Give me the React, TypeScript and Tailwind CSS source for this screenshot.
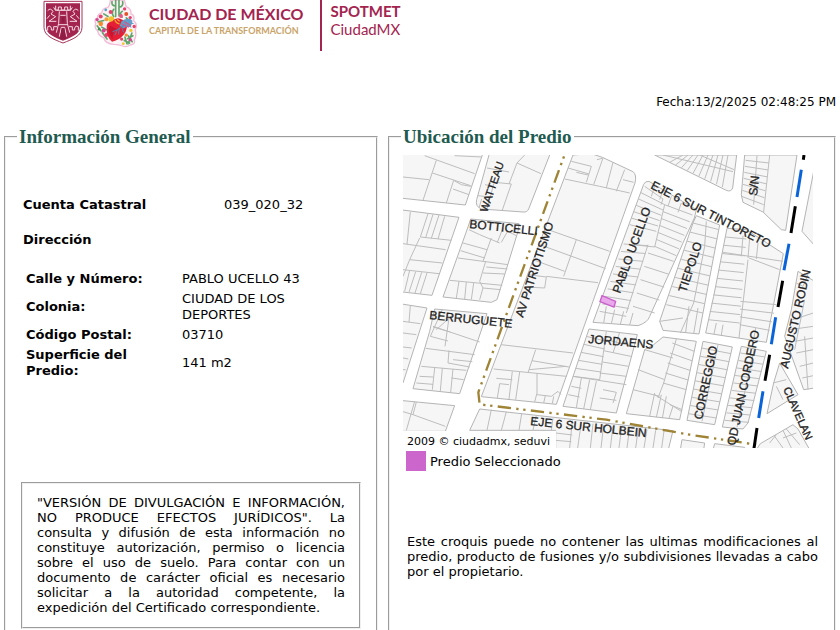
import type { ReactNode } from "react";

type Rung = [number, number, number, number, number, number, number, number, number];

// evenly spaced lot lines between the edges a-b and c-d
function rungs([ax, ay, bx, by, cx, cy, dx, dy, n]: Rung) {
  let d = "";
  for (let i = 0; i <= n; i++) {
    const t = i / n;
    d += `M${ax + (bx - ax) * t} ${ay + (by - ay) * t}L${cx + (dx - cx) * t} ${cy + (dy - cy) * t}`;
  }
  return d;
}

const blocks = [
  "M0 0L253 0L248 16L197 166L0 145Z",
  "M273 0L456 0L450 16L387 178Q382 189 370 187L245 178Q226 170 231 150L268 16Z",
  "M0 180L178 203L97 437L0 426Z",
  "M213 208L358 222L356 242L292 450L275 458L130 442L205 232Z",
  "M0 462L82 475L10 700L0 700Z",
  "M105 478L262 492L180 732L40 717L90 545Z",
  "M0 752L165 768L137 845L0 845Z",
  "M240 778L820 843L806 900L468 900L468 842L210 842Z",
  "M520 16L575 12L608 23L700 66Q712 75 706 100L470 764L245 741L304 585Z",
  "M748 95L890 180L884 205L750 500Q745 518 715 528L580 518L732 104Q736 94 748 95Z",
  "M568 538L713 555L650 790L490 770Z",
  "M890 198L960 226L898 553L790 542L780 515L802 450L880 220Z",
  "M790 562L890 575L840 810L680 792L735 600L762 585Z",
  "M982 236L1040 240L1151 312L1100 578L918 550L942 440Z",
  "M910 575L998 592L945 825L862 812Z",
  "M1025 590L1100 605L1045 820L1030 838L968 832Z",
  "M765 16L1011 16L999 115Q994 128 980 122Z",
  "M1035 16L1192 16L1158 242L1145 240L1090 187L1030 158L1025 135Z",
  "M1245 50L1207 245L1245 288Z",
  "M1195 365L1245 395L1245 715L1212 720L1155 560L1175 480Z",
  "M1140 640L1195 735L1102 792L1122 700Z",
  "M1082 882L1180 825L1195 838L1230 900L1070 900Z",
  "M847 870L915 880L912 900L842 900Z",
  "M945 882L1035 893L1035 900L940 900Z",
];

const lots = [
  // west of Watteau
  "M10 82L88 90M70 152L110 32M75 18L225 72M98 70L213 108M165 18L246 22M162 92L140 160M162 92L185 105L213 110M160 118L208 135",
  "M375 16L352 40L424 72M352 40L328 103M285 98L335 103L308 181M262 55L328 67M235 138L270 142M283 100L262 178M256 105L283 110M246 148L238 175",
  "M32 187L22 284M10 282L138 300M85 192L62 262L155 272M100 194L78 264M118 196L95 266M135 200L115 268M60 265L30 330L10 380M30 330L128 340M10 360L118 372M30 362L15 425M48 366L28 428M66 368L46 430M82 370L62 432",
  // Botticelli to Berruguete
  "M208 240L240 255L300 280M308 240L293 278M325 243L305 278M190 280L262 300M183 303L255 325M175 325L325 345M275 265L250 335M258 335L240 395L250 415L240 450M260 352L323 358M250 370L315 373M150 392L308 407M178 395L170 445M200 397L195 448M222 400L215 450M250 415L303 420M320 243L350 258",
  "M10 515L62 522M32 468L28 518M10 550L50 555M10 592L36 595M10 625L26 628M10 660L18 660",
  "M128 480L92 560L145 574M100 532L152 547M110 540L160 495M148 505L136 590M100 530L240 577M78 596L225 615M148 602L145 640L210 652M160 630L218 636M65 650L200 662M105 655L98 720M128 655L122 724M160 658L153 728M60 680L100 682M50 700L100 704M155 685L192 690",
  "M45 755L20 842M50 757L40 795L137 830M40 795L10 786",
  "M275 780L262 842M320 786L305 842M366 792L358 842M410 797L400 842M460 806L455 842M468 850L518 856M468 872L515 876M518 812L510 895M545 818L534 895M580 822L572 895M612 826L604 895M640 830L632 895M666 832L658 895M690 833L682 895M716 836L708 895M742 840L733 895M768 842L760 895M793 844L786 895",
  // big block east of Patriotismo
  "M495 88L600 110L690 130M515 35L575 50L560 98M505 55L568 73M530 68L565 76M610 25L582 105M592 30L608 26M640 38L620 115M675 60L650 125M670 90L702 98M445 240L630 305M530 270L492 380M420 285L618 357M400 330L495 365M385 375L440 382L435 415L375 412M440 380L595 399",
  "M304 585L520 610M408 600L388 660L500 650M388 660L385 670M397 633L508 652M282 658L500 680M338 665L328 748M360 667L348 750M412 672L412 730L405 757M338 690L290 686M328 705L300 702L293 745M412 735L455 740L475 725L484 735M437 738L432 760M462 740L458 762",
  // Pablo Ucello to Tiepolo
  rungs([722, 128, 690, 225, 795, 165, 770, 245, 5]),
  rungs([795, 165, 765, 290, 878, 196, 830, 318, 6]),
  rungs([672, 283, 600, 485, 745, 288, 680, 500, 9]),
  rungs([745, 310, 700, 470, 822, 335, 765, 490, 4]),
  "M795 165L765 292L700 285M745 285L680 490M735 110L790 148L784 165M765 110L755 140M790 120L780 150M815 140L805 170M845 160L835 188M620 470L612 520M645 480L635 522M672 485L662 524M700 490L690 526",
  // south of Jordaens
  rungs([560, 560, 520, 680, 620, 575, 600, 690, 5]),
  rungs([620, 570, 600, 670, 700, 590, 680, 680, 3]),
  "M520 680L680 705M545 685L530 775M570 690L552 778M590 695L572 780M610 720L650 728L640 760M600 745L650 752M515 710L545 716M506 735L540 742M620 545L600 690M660 548L640 610",
  // Tiepolo
  rungs([880, 220, 800, 465, 958, 240, 910, 490, 9]),
  "M920 215L915 290L882 460L842 550M868 470L858 548M895 475L882 552M780 515L850 505",
  rungs([818, 580, 790, 700, 884, 605, 860, 720, 4]),
  "M830 568L792 700M735 600L820 625M715 660L795 690M700 720L780 740M765 730L750 800M785 735L770 803M800 740L788 806M820 770L808 806M765 735L845 785M792 700L775 745M810 765L848 780",
  // Tintoreto
  rungs([978, 262, 925, 510, 1040, 268, 1020, 520, 10]),
  rungs([1022, 455, 1020, 525, 1130, 465, 1110, 542, 3]),
  "M1030 258L1025 320M1050 265L1045 325M1075 280L1070 328M970 308L1150 335M1048 325L1140 360M1045 330L1018 565M950 520L943 553M970 525L965 556M1068 535L1062 570",
  rungs([906, 595, 866, 792, 994, 612, 950, 805, 8]),
  "M955 585L907 815",
  rungs([1022, 610, 975, 812, 1096, 622, 1048, 818, 9]),
  "M1064 598L1012 832",
  // north edge
  rungs([850, 16, 985, 16, 810, 38, 968, 112, 9]),
  "M790 16L1000 66M900 16L1003 60",
  rungs([1038, 32, 1026, 140, 1108, 40, 1092, 165, 6]),
  "M1110 16L1092 187M1072 18L1062 165",
  // Augusto Rodin
  "M1200 380L1225 375L1210 410L1190 400M1215 450L1185 600M1180 510L1241 490M1170 540L1241 530M1185 575L1241 565M1190 610L1241 600M1200 650L1241 640M1208 685L1241 678M1215 560L1225 720M1120 700L1160 690M1130 710L1150 750M1110 880L1130 855M1150 895L1125 860M1175 895L1150 842M1200 885L1160 838M1150 865L1190 850",
];

const tram: [string, string][] = [
  ["M1213 16L1211 30", "#000"],
  ["M1205 60L1192 142", "#0a64d8"],
  ["M1187 170L1174 250", "#000"],
  ["M1168 282L1153 362", "#0a64d8"],
  ["M1149 393L1135 472", "#000"],
  ["M1128 503L1115 584", "#0a64d8"],
  ["M1110 615L1096 693", "#000"],
  ["M1090 725L1077 805", "#0a64d8"],
  ["M1072 835L1063 896", "#000"],
];

const streets = [
  { name: "WATTEAU", x: 84, y: 58, angle: -71 },
  { name: "BOTTICELLI", x: 66, y: 73, angle: 6 },
  { name: "AV PATRIOTISMO", x: 120, y: 163, angle: -72 },
  { name: "BERRUGUETE", x: 26, y: 164, angle: 6 },
  { name: "PABLO UCELLO", x: 217, y: 139, angle: -70 },
  { name: "TIEPOLO", x: 283, y: 138, angle: -72 },
  { name: "EJE 6 SUR TINTORETO", x: 247, y: 33, angle: 27 },
  { name: "S/N", x: 354, y: 41, angle: -84 },
  { name: "JORDAENS", x: 185, y: 188, angle: 5 },
  { name: "CORREGGIO", x: 299, y: 265, angle: -78 },
  { name: "QD JUAN CORDERO", x: 332, y: 291, angle: -78 },
  { name: "AUGUSTO RODIN", x: 385, y: 214, angle: -77 },
  { name: "CLAVELAN", x: 380, y: 234, angle: 66 },
  { name: "EJE 6 SUR HOLBEIN", x: 127, y: 270, angle: 6 },
];

function StreetMap() {
  return (
    <svg viewBox="0 0 410 293" className="block w-[410px] max-w-full" role="img" aria-label="Croquis de ubicación">
      <g transform="scale(0.33333) translate(-10 -16)" fill="none">
        <g fill="#f6f6f6" stroke="#b4b4b4" strokeWidth="3">
          {blocks.map((d) => <path key={d} d={d} />)}
        </g>
        <g stroke="#bdbdbd" strokeWidth="3">
          {lots.map((d) => <path key={d} d={d} />)}
        </g>
        <path d="M607 438L648 455L643 472L601 456Z" fill="#e9a8ea" stroke="#c95fcb" strokeWidth="4" />
        <path
          d="M493 20L340 440L236 728L240 764L620 810L870 855L1070 885"
          stroke="#a08436"
          strokeWidth="7"
          strokeDasharray="7 14 7 16 40 16"
        />
        {tram.map(([d, color]) => <path key={d} d={d} stroke={color} strokeWidth="9" />)}
      </g>
      <g className="font-['Liberation_Sans',sans-serif] text-[12px]" fill="#222" stroke="#222" strokeWidth="0.3">
        {streets.map((s) => (
          <text
            key={s.name}
            transform={`translate(${s.x} ${s.y}) rotate(${s.angle})`}
            className={s.name === "CLAVELAN" || s.name === "WATTEAU" ? "text-[11px]" : undefined}
          >
            {s.name}
          </text>
        ))}
      </g>
      <path d="M0 276H153V293H0Z" fill="#fff" />
      <text x="4" y="290" className="font-['DejaVu_Sans',sans-serif] text-[11px]">2009 © ciudadmx, seduvi</text>
    </svg>
  );
}

function Shield() {
  return (
    <svg viewBox="40 0 120 132" className="h-11 w-10" aria-hidden="true">
      <path d="M43 4H157V82C157 108 128 118 100 129C72 118 43 108 43 82Z" fill="#fff" stroke="#a8315a" strokeWidth="3" />
      <path d="M49 10H151V81C151 103 124 112 100 122C76 112 49 103 49 81Z" fill="#a3244f" />
      <g fill="none" stroke="#f3d9e2" strokeWidth="3">
        <path d="M78 17V30H86V21H95V30H105V21H114V30H122V17" />
        <path d="M80 31H120M89 34L87 70L80 98M111 34L113 70L120 98M92 46H108M86 74H114" />
        <path d="M54 32Q62 22 70 34L64 42L78 50L58 64H80M60 46L52 56M72 22L78 32" />
        <path d="M146 32Q138 22 130 34L136 42L122 50L142 64H120M140 46L148 56M128 22L122 32" />
        <path d="M54 92V80Q62 74 65 84V90H72V80H82M146 92V80Q138 74 135 84V90H128V80H118M89 110L95 82H105L111 110" />
      </g>
      <path d="M96 50H104V68H96ZM96 84H104L109 118H91Z" fill="#8f1d44" />
    </svg>
  );
}

const petals: [number, number, number, string][] = [
  [213, 50, 6, "#e4456e"], [230, 58, 6, "#f2a03d"], [213, 72, 7, "#f28c2e"], [243, 36, 6, "#e4456e"],
  [228, 30, 4, "#4aa3c9"], [202, 59, 5, "#d64590"], [274, 48, 6, "#e8588a"], [290, 42, 6, "#e5532d"],
  [302, 53, 5, "#e4456e"], [314, 80, 5, "#e4456e"], [304, 92, 5, "#f4c430"], [222, 92, 6, "#d64590"],
  [208, 88, 4, "#3c9150"], [290, 106, 5, "#f28c2e"], [230, 106, 6, "#e4456e"], [276, 118, 5, "#e4456e"],
  [302, 120, 5, "#d64590"], [245, 58, 9, "#f4c430"], [281, 132, 4, "#f4c430"], [285, 27, 5, "#e4456e"],
];

function HeartEmblem() {
  return (
    <svg viewBox="190 0 135 145" className="h-12 w-[45px]" aria-hidden="true">
      <path
        d="M242 0L284 0L290 20Q306 26 304 42Q317 46 312 62Q326 74 317 90Q322 108 314 121Q319 134 302 136Q290 144 279 139Q268 134 253 134Q226 132 222 114Q205 108 204 94Q192 84 198 72Q192 58 203 54Q203 42 216 39Q218 24 233 23Q240 20 242 0Z"
        fill="#fdf3f5"
        stroke="#f3bcd8"
        strokeWidth="4"
      />
      <g fill="none" stroke="#5fa56c" strokeWidth="5" strokeLinecap="round">
        <path d="M258 0V50M268 0V48M258 18Q245 18 247 5M268 22Q282 20 279 5M252 28Q244 40 252 50M278 34Q268 40 277 52" />
        <path d="M222 42L235 50M205 66L222 62M216 82L230 90M202 78L214 94M290 54L304 66M307 100L296 132M310 108L294 117M286 112L292 132M218 99L232 118M296 108L308 126M284 122L300 130" />
      </g>
      {petals.map(([cx, cy, r, fill]) => (
        <circle key={`${cx}-${cy}`} cx={cx} cy={cy} r={r} fill={fill} />
      ))}
      <path d="M252 60Q266 50 278 60L292 68Q294 88 284 103Q271 121 247 126Q230 112 231 87Q229 68 243 66Q250 66 252 60Z" fill="#e51f35" />
      <path d="M240 76Q233 97 249 119Q246 97 262 88Z" fill="#c81530" />
      <path d="M276 64Q298 50 310 64Q301 64 314 72Q300 72 306 84Q292 76 282 86L270 78Z" fill="#5f9fca" />
      <path d="M284 66L304 77M276 73L298 82" stroke="#d1598c" strokeWidth="4" />
      <path d="M282 78Q262 84 256 106M270 84L266 104M268 88L248 96M276 82L282 98" fill="none" stroke="#5b7fae" strokeWidth="3" />
      <path d="M256 60Q258 70 270 72M262 58L270 64" fill="none" stroke="#f4a52f" strokeWidth="4" />
    </svg>
  );
}

function Panel({ title, children }: { title: string; children: ReactNode }) {
  return (
    <fieldset className="min-w-0 border-2 border-[#f0f0f0] pr-3 pb-10 pl-[13px] [border-style:groove]">
      <legend className="-ml-[2px] px-[2px] font-['Liberation_Serif',serif] text-[19px] leading-6 font-bold text-[#1f5b50]">
        {title}
      </legend>
      {children}
    </fieldset>
  );
}

const address = [
  { label: "Calle y Número:", value: "PABLO UCELLO 43" },
  { label: "Colonia:", value: "CIUDAD DE LOS DEPORTES" },
  { label: "Código Postal:", value: "03710" },
  { label: "Superficie del Predio:", value: "141 m2" },
];

export default function App() {
  return (
    <main className="bg-white pr-1 pl-1 font-['DejaVu_Sans',sans-serif] text-[13px] leading-[15px] text-black">
      <header className="flex h-[51px] items-start pl-[39px]">
        <Shield />
        <div className="pl-[10px]">
          <HeartEmblem />
        </div>
        <div className="pt-1 pl-[11px] font-['Lato',sans-serif]">
          <h1 className="text-[16px] leading-5 font-bold text-[#a3244f]">CIUDAD DE MÉXICO</h1>
          <p className="text-[9px] leading-[13px] font-bold text-[#c9a469]">CAPITAL DE LA TRANSFORMACIÓN</p>
        </div>
        <div className="ml-4 h-[51px] border-l-2 border-[#a3244f] pt-[2px] pl-[9px] font-['Lato',sans-serif] text-[15px] leading-[18px] text-[#a3244f]">
          <p className="font-bold">SPOTMET</p>
          <p>CiudadMX</p>
        </div>
      </header>

      <p className="pt-11 text-right text-[12px]">Fecha:13/2/2025 02:48:25 PM</p>

      <div className="grid grid-cols-[374fr_448fr] gap-[10px] pt-[15px]">
        <Panel title="Información General">
          <div className="px-[4px] pt-12">
            <div className="grid grid-cols-[201px_1fr]">
              <h2 className="font-bold">Cuenta Catastral</h2>
              <p>039_020_32</p>
            </div>
            <h2 className="pt-5 font-bold">Dirección</h2>
            <table className="mt-[22px] w-full table-fixed text-left leading-4">
              <tbody>
                {address.map((row) => (
                  <tr key={row.label}>
                    <th className="w-[159px] py-[2px] pr-8 pl-[3px] align-middle font-bold">{row.label}</th>
                    <td className="py-[2px] pr-10 align-middle">{row.value}</td>
                  </tr>
                ))}
              </tbody>
            </table>
          </div>
          <div className="mt-[101px] mr-[3px] ml-[2px] border-2 border-[#f0f0f0] px-[14px] pt-[11px] pb-3 [border-style:groove]">
            <p className="text-justify">
              "VERSIÓN DE DIVULGACIÓN E INFORMACIÓN, NO PRODUCE EFECTOS JURÍDICOS". La consulta y difusión de esta
              información no constituye autorización, permiso o licencia sobre el uso de suelo. Para contar con un
              documento de carácter oficial es necesario solicitar a la autoridad competente, la expedición del
              Certificado correspondiente.
            </p>
          </div>
        </Panel>

        <Panel title="Ubicación del Predio">
          <div className="pt-[6px]">
            <StreetMap />
          </div>
          <div className="flex items-center gap-1 pt-[3px] pl-[3px]">
            <span className="size-5 bg-[#cc66cc]" />
            <span>Predio Seleccionado</span>
          </div>
          <p className="px-1 pt-[63px] text-justify">
            Este croquis puede no contener las ultimas modificaciones al predio, producto de fusiones y/o subdivisiones
            llevadas a cabo por el propietario.
          </p>
        </Panel>
      </div>
    </main>
  );
}
